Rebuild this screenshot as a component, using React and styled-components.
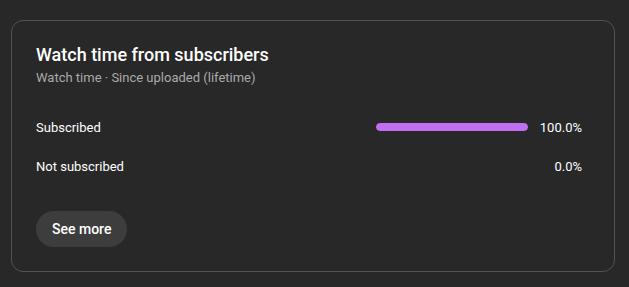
import React from 'react';
import styled, { createGlobalStyle } from 'styled-components';

const GlobalStyle = createGlobalStyle`
  html, body {
    margin: 0;
    padding: 0;
    background: #282828;
    font-family: Roboto, "Noto Sans", Arial, sans-serif;
  }
`;

const Page = styled.div`
  padding: 20px 15px 0 11px;
`;

const Card = styled.section`
  box-sizing: border-box;
  width: 604px;
  height: 252px;
  border: 1px solid #525252;
  border-radius: 12px;
  padding: 21px 32px 0 24px;
  color: #fff;
`;

const Title = styled.h2`
  margin: 0;
  font-size: 18px;
  line-height: 26px;
  font-weight: 500;
`;

const Subtitle = styled.div`
  margin-top: 1px;
  font-size: 13px;
  line-height: 18px;
  color: #aaa;
`;

const Rows = styled.div`
  margin-top: 30px;
  display: flex;
  flex-direction: column;
  gap: 19px;
`;

const Row = styled.div`
  display: flex;
  align-items: center;
  height: 20px;
  font-size: 13px;
`;

const Label = styled.div`
  flex: 1;
`;

const Track = styled.div`
  width: 152px;
  height: 8px;
  border-radius: 4px;
  overflow: hidden;
`;

const Fill = styled.div`
  height: 100%;
  border-radius: 4px;
  background: #c06ff2;
`;

const Value = styled.div`
  width: 54px;
  text-align: right;
`;

const Button = styled.button`
  margin-top: 35px;
  height: 36px;
  padding: 0 16px;
  border: none;
  border-radius: 18px;
  background: #3d3d3d;
  color: #fff;
  font-family: inherit;
  font-size: 14px;
  font-weight: 500;
`;

const rows = [
  { label: 'Subscribed', value: 100.0 },
  { label: 'Not subscribed', value: 0.0 },
];

export default function App() {
  return (
    <Page>
      <GlobalStyle />
      <Card>
        <Title>Watch time from subscribers</Title>
        <Subtitle>Watch time · Since uploaded (lifetime)</Subtitle>
        <Rows>
          {rows.map(r => (
            <Row key={r.label}>
              <Label>{r.label}</Label>
              <Track>
                {r.value > 0 && <Fill style={{ width: `${r.value}%` }} />}
              </Track>
              <Value>{r.value.toFixed(1)}%</Value>
            </Row>
          ))}
        </Rows>
        <Button>See more</Button>
      </Card>
    </Page>
  );
}
